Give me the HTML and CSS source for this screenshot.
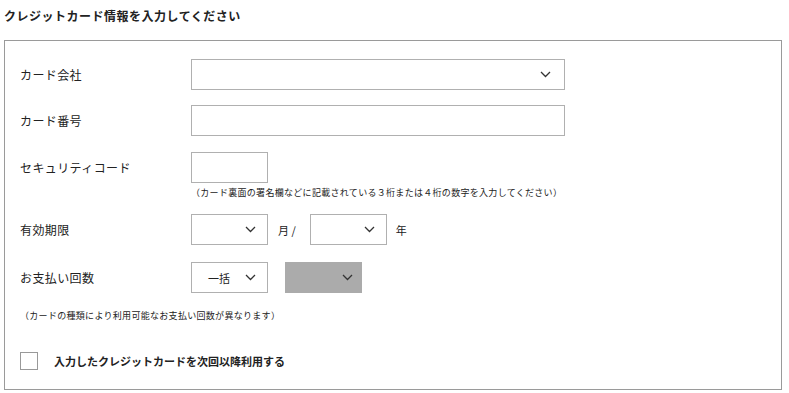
FILE: index.html
```html
<!DOCTYPE html>
<html lang="ja">
<head>
<meta charset="utf-8">
<link rel="stylesheet" href="styles.css">
</head>
<body>
<div class="page">
  <h1 class="title">クレジットカード情報を入力してください</h1>
  <div class="box">
    <div class="row">
      <div class="label">カード会社</div>
      <div class="field select wide"><svg class="chev" width="11" height="7" viewBox="0 0 11 7"><path d="M1 1l4.5 4.5L10 1" fill="none" stroke="#333" stroke-width="1.3"/></svg></div>
    </div>
    <div class="row r2">
      <div class="label">カード番号</div>
      <div class="field wide"></div>
    </div>
    <div class="row r3">
      <div class="label">セキュリティコード</div>
      <div class="field short"></div>
    </div>
    <p class="note note1">（カード裏面の署名欄などに記載されている３桁または４桁の数字を入力してください）</p>
    <div class="row r4">
      <div class="label">有効期限</div>
      <div class="field select short"><svg class="chev" width="11" height="7" viewBox="0 0 11 7"><path d="M1 1l4.5 4.5L10 1" fill="none" stroke="#333" stroke-width="1.3"/></svg></div>
      <span class="unit u1">月 /</span>
      <div class="field select short"><svg class="chev" width="11" height="7" viewBox="0 0 11 7"><path d="M1 1l4.5 4.5L10 1" fill="none" stroke="#333" stroke-width="1.3"/></svg></div>
      <span class="unit u2">年</span>
    </div>
    <div class="row r5">
      <div class="label">お支払い回数</div>
      <div class="field select short pay"><span class="val">一括</span><svg class="chev" width="11" height="7" viewBox="0 0 11 7"><path d="M1 1l4.5 4.5L10 1" fill="none" stroke="#333" stroke-width="1.3"/></svg></div>
      <div class="field select short gray"><svg class="chev" width="11" height="7" viewBox="0 0 11 7"><path d="M1 1l4.5 4.5L10 1" fill="none" stroke="#333" stroke-width="1.3"/></svg></div>
    </div>
    <p class="note note2">（カードの種類により利用可能なお支払い回数が異なります）</p>
    <label class="check">
      <span class="cbox"></span>
      <span class="clabel">入力したクレジットカードを次回以降利用する</span>
    </label>
  </div>
</div>
</body>
</html>
```

FILE: styles.css
```css
* { box-sizing: border-box; }
html, body { margin: 0; padding: 0; background: #fff; }
body {
  font-family: "Noto Sans CJK JP", "Noto Sans", sans-serif;
  color: #222;
}
.page { padding: 7px 0 0 4px; }
.title {
  margin: 0;
  font-size: 12px;
  line-height: 18px;
  font-weight: 700;
  letter-spacing: 0.5px;
}
.box {
  margin-top: 15px;
  width: 778px;
  border: 1px solid #9a9a9a;
  padding: 18px 0 19px 15px;
}
.row {
  display: flex;
  align-items: center;
  height: 31px;
}
.r2 { margin-top: 15px; }
.r3 { margin-top: 16px; }
.r4 { margin-top: 14px; }
.r5 { margin-top: 17px; }
.label {
  width: 171px;
  flex: none;
  font-size: 12px;
  letter-spacing: 0.4px;
}
.field {
  height: 31px;
  border: 1px solid #b0b0b0;
  background: #fff;
  flex: none;
}
.wide { width: 374px; }
.short { width: 77px; }
.select {
  display: flex;
  align-items: center;
  justify-content: flex-end;
  padding-right: 11px;
}
.wide.select { padding-right: 13px; }
.chev { display: block; }
.pay .val { font-size: 11px; margin-right: 15px; }
.gray {
  background: #ababab;
  border-color: #ababab;
  margin-left: 17px;
  padding-right: 8px;
}
.unit { font-size: 11px; }
.u1 { margin: 0 14px 0 10px; }
.u2 { margin-left: 9px; }
.note {
  margin: 0;
  font-size: 9px;
  line-height: 14px;
  letter-spacing: 0.3px;
}
.note1 { margin: 3px 0 0 171px; }
.note2 { margin-top: 16px; }
.check {
  display: flex;
  align-items: center;
  margin-top: 29px;
}
.cbox {
  width: 18px;
  height: 18px;
  border: 1px solid #999;
  background: #fff;
}
.clabel {
  margin-left: 16px;
  font-size: 11px;
  font-weight: 700;
}
```
